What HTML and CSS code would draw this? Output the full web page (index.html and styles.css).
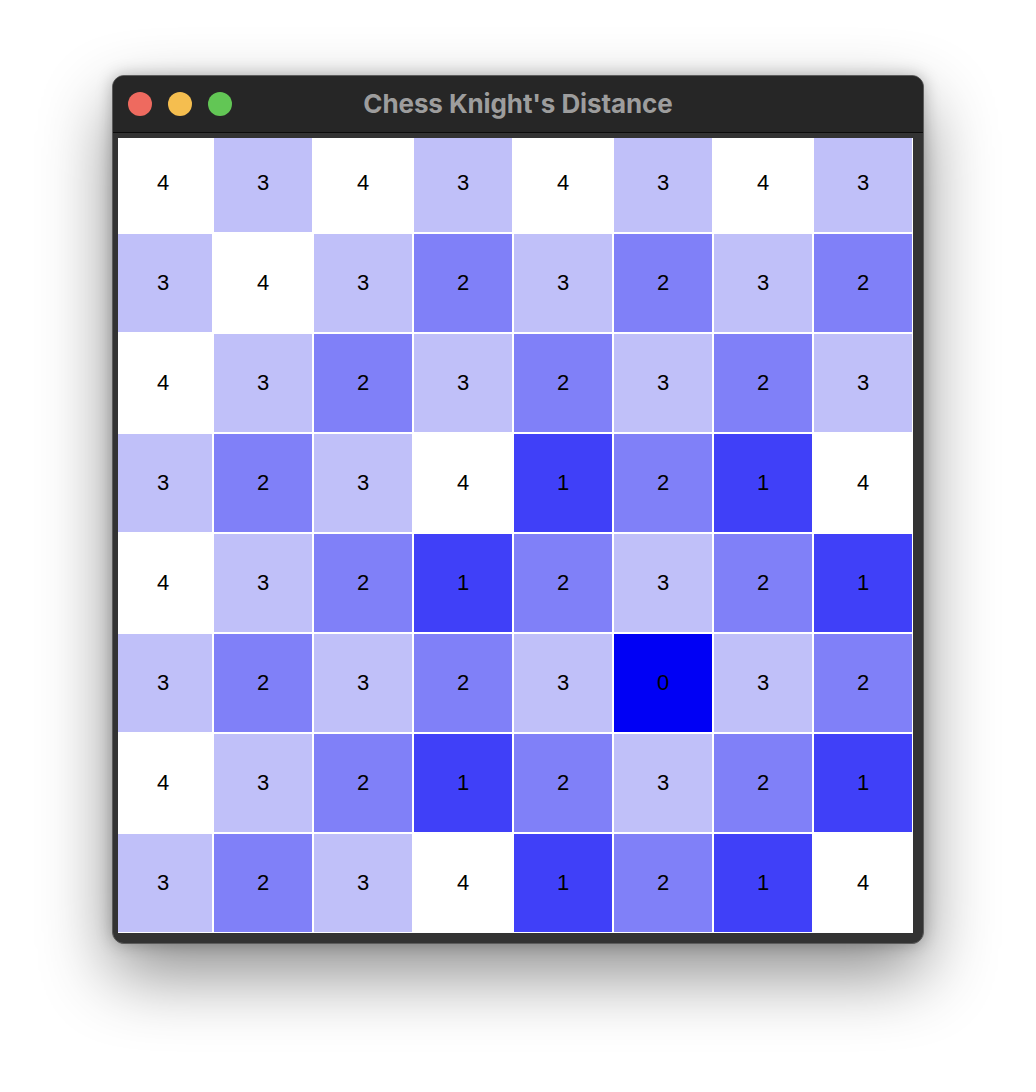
FILE: index.html
```html
<!DOCTYPE html>
<html>
<head>
<meta charset="utf-8">
<link rel="stylesheet" href="styles.css">
<title>Chess Knight's Distance</title>
</head>
<body>
<div class="stage">
  <div class="window">
    <div class="titlebar">
      <div class="lights">
        <span class="light red"></span>
        <span class="light yellow"></span>
        <span class="light green"></span>
      </div>
      <div class="title">Chess Knight's Distance</div>
    </div>
    <div class="content">
      <div class="viewport">
        <div class="board">
          <div class="cell d4">4</div><div class="cell d3">3</div><div class="cell d4">4</div><div class="cell d3">3</div><div class="cell d4">4</div><div class="cell d3">3</div><div class="cell d4">4</div><div class="cell d3">3</div>
          <div class="cell d3">3</div><div class="cell d4">4</div><div class="cell d3">3</div><div class="cell d2">2</div><div class="cell d3">3</div><div class="cell d2">2</div><div class="cell d3">3</div><div class="cell d2">2</div>
          <div class="cell d4">4</div><div class="cell d3">3</div><div class="cell d2">2</div><div class="cell d3">3</div><div class="cell d2">2</div><div class="cell d3">3</div><div class="cell d2">2</div><div class="cell d3">3</div>
          <div class="cell d3">3</div><div class="cell d2">2</div><div class="cell d3">3</div><div class="cell d4">4</div><div class="cell d1">1</div><div class="cell d2">2</div><div class="cell d1">1</div><div class="cell d4">4</div>
          <div class="cell d4">4</div><div class="cell d3">3</div><div class="cell d2">2</div><div class="cell d1">1</div><div class="cell d2">2</div><div class="cell d3">3</div><div class="cell d2">2</div><div class="cell d1">1</div>
          <div class="cell d3">3</div><div class="cell d2">2</div><div class="cell d3">3</div><div class="cell d2">2</div><div class="cell d3">3</div><div class="cell d0">0</div><div class="cell d3">3</div><div class="cell d2">2</div>
          <div class="cell d4">4</div><div class="cell d3">3</div><div class="cell d2">2</div><div class="cell d1">1</div><div class="cell d2">2</div><div class="cell d3">3</div><div class="cell d2">2</div><div class="cell d1">1</div>
          <div class="cell d3">3</div><div class="cell d2">2</div><div class="cell d3">3</div><div class="cell d4">4</div><div class="cell d1">1</div><div class="cell d2">2</div><div class="cell d1">1</div><div class="cell d4">4</div>
        </div>
      </div>
    </div>
  </div>
</div>
</body>
</html>
```

FILE: styles.css
```css
html, body {
  margin: 0;
  padding: 0;
  background: #ffffff;
}

.stage {
  width: 1036px;
  height: 1092px;
  padding: 75px 0 0 112px;
  box-sizing: border-box;
}

.window {
  width: 812px;
  height: 869px;
  box-sizing: border-box;
  border: 1px solid #5c5c5c;
  border-radius: 12px;
  background: #333333;
  overflow: hidden;
  box-shadow: 0 30px 70px rgba(0, 0, 0, 0.45), 0 0 16px rgba(0, 0, 0, 0.25);
  display: flex;
  flex-direction: column;
}

.titlebar {
  position: relative;
  height: 56px;
  flex: none;
  background: #262626;
  border-bottom: 1px solid #0c0c0c;
  display: flex;
  align-items: center;
  justify-content: center;
}

.lights {
  position: absolute;
  left: 15px;
  top: 16px;
  display: flex;
  gap: 16px;
}

.light {
  width: 24px;
  height: 24px;
  border-radius: 50%;
  display: block;
}

.red { background: #ee6a5f; }
.yellow { background: #f5be4f; }
.green { background: #62c655; }

.title {
  font-family: Inter, "Liberation Sans", sans-serif;
  font-weight: 700;
  font-size: 26px;
  letter-spacing: -0.1px;
  color: #9d9d9d;
  margin-top: -1px;
}

.content {
  padding: 5px 10px 10px 5px;
}

.viewport {
  width: 795px;
  height: 795px;
  overflow: hidden;
}

.board {
  width: 800px;
  height: 800px;
  margin: -5px 0 0 -5px;
  background: #ffffff;
  display: grid;
  grid-template-columns: repeat(8, 100px);
  grid-template-rows: repeat(8, 100px);
}

.cell {
  box-sizing: border-box;
  border: 1px solid #ffffff;
  display: flex;
  align-items: center;
  justify-content: center;
  font-family: "Liberation Sans", Arial, sans-serif;
  font-size: 22px;
  color: #000000;
}

.d0 { background: #0000f5; }
.d1 { background: #4040f8; }
.d2 { background: #8080f8; }
.d3 { background: #c0c0f9; }
.d4 { background: #ffffff; }
```
